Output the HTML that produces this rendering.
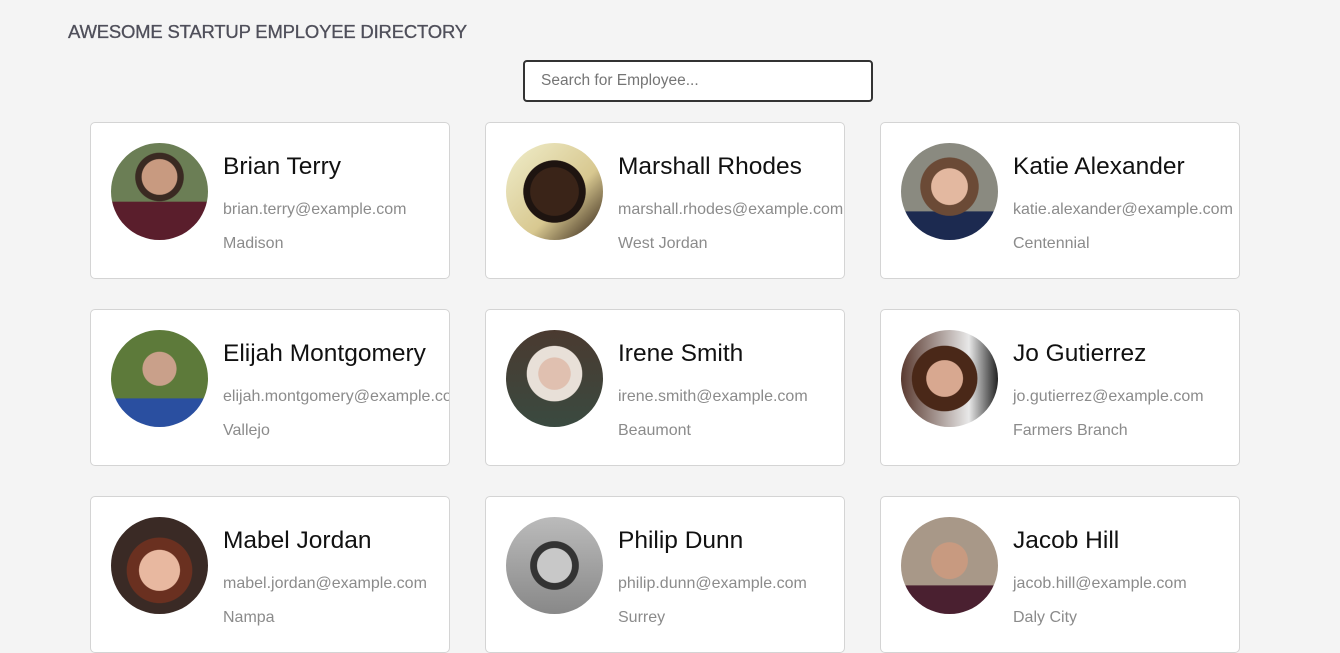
<!DOCTYPE html>
<html><head><meta charset="utf-8"><style>
*{box-sizing:border-box;margin:0;padding:0}
body{width:1340px;height:637px;overflow:hidden;background:#f4f4f4;font-family:"Liberation Sans",sans-serif;position:relative}
h1{position:absolute;left:68px;top:21px;font-size:18.5px;font-weight:normal;color:#4f4f5a;letter-spacing:-0.2px;-webkit-text-stroke:0.3px #4f4f5a}
.search{position:absolute;left:523px;top:60px;width:350px;height:42px;border:2px solid #333;border-radius:4px;background:#fff;padding-left:16px;line-height:38px;font-size:15.5px;color:#757575}
.card{position:absolute;width:360px;height:157px;background:#fff;border:1px solid #d4d4d4;border-radius:5px;overflow:hidden}
.av{position:absolute;left:20px;top:20px;width:97px;height:97px;border-radius:50%}
.n{position:absolute;left:132px;top:30px;font-size:24.5px;color:#111;white-space:nowrap}
.e{position:absolute;left:132px;top:78px;font-size:16px;color:#8b8b8b;white-space:nowrap}
.c{position:absolute;left:132px;top:112px;font-size:16px;color:#8b8b8b;white-space:nowrap}
</style></head><body>
<h1>AWESOME STARTUP EMPLOYEE DIRECTORY</h1>
<div class="search">Search for Employee...</div>

<div class="card" style="left:90px;top:122px"><div class="av" style="background:radial-gradient(circle at 50% 35%,#c89a80 0 22%,#3a2a22 23% 30%,transparent 31%),linear-gradient(#6b7e55 0 60%,#5a1e2c 61%)"></div><div class="n">Brian Terry</div><div class="e">brian.terry@example.com</div><div class="c">Madison</div></div>
<div class="card" style="left:485px;top:122px"><div class="av" style="background:radial-gradient(circle at 50% 50%,#3a2418 0 35%,#1e1410 36% 45%,transparent 46%),linear-gradient(135deg,#f0eecb,#d8c890 60%,#2a1a10)"></div><div class="n">Marshall Rhodes</div><div class="e">marshall.rhodes@example.com</div><div class="c">West Jordan</div></div>
<div class="card" style="left:880px;top:122px"><div class="av" style="background:radial-gradient(circle at 50% 45%,#e3b8a0 0 25%,#6b4a36 26% 40%,transparent 41%),linear-gradient(#8a8a80 0 70%,#1c2a50 71%)"></div><div class="n">Katie Alexander</div><div class="e">katie.alexander@example.com</div><div class="c">Centennial</div></div>

<div class="card" style="left:90px;top:309px"><div class="av" style="background:radial-gradient(circle at 50% 40%,#c9a08a 0 22%,transparent 23%),linear-gradient(#5d7a3a 0 70%,#2a4fa0 71%)"></div><div class="n">Elijah Montgomery</div><div class="e">elijah.montgomery@example.com</div><div class="c">Vallejo</div></div>
<div class="card" style="left:485px;top:309px"><div class="av" style="background:radial-gradient(circle at 50% 45%,#e0c0b0 0 22%,#e8e0d8 23% 38%,transparent 39%),linear-gradient(#4a3a30,#3a4a40)"></div><div class="n">Irene Smith</div><div class="e">irene.smith@example.com</div><div class="c">Beaumont</div></div>
<div class="card" style="left:880px;top:309px"><div class="av" style="background:radial-gradient(circle at 45% 50%,#d8a890 0 25%,#4a2818 26% 45%,transparent 46%),linear-gradient(90deg,#5a3a30,#e8e8e8 70%,#222)"></div><div class="n">Jo Gutierrez</div><div class="e">jo.gutierrez@example.com</div><div class="c">Farmers Branch</div></div>

<div class="card" style="left:90px;top:496px"><div class="av" style="background:radial-gradient(circle at 50% 55%,#e8b8a0 0 28%,#6a3020 29% 45%,transparent 46%),#3a2a25"></div><div class="n">Mabel Jordan</div><div class="e">mabel.jordan@example.com</div><div class="c">Nampa</div></div>
<div class="card" style="left:485px;top:496px"><div class="av" style="background:radial-gradient(circle at 50% 50%,#c8c8c8 0 25%,#333 26% 35%,transparent 36%),linear-gradient(#bbb,#888)"></div><div class="n">Philip Dunn</div><div class="e">philip.dunn@example.com</div><div class="c">Surrey</div></div>
<div class="card" style="left:880px;top:496px"><div class="av" style="background:radial-gradient(circle at 50% 45%,#c89a80 0 25%,transparent 26%),linear-gradient(#a89888 0 70%,#4a2030 71%)"></div><div class="n">Jacob Hill</div><div class="e">jacob.hill@example.com</div><div class="c">Daly City</div></div>
</body></html>
